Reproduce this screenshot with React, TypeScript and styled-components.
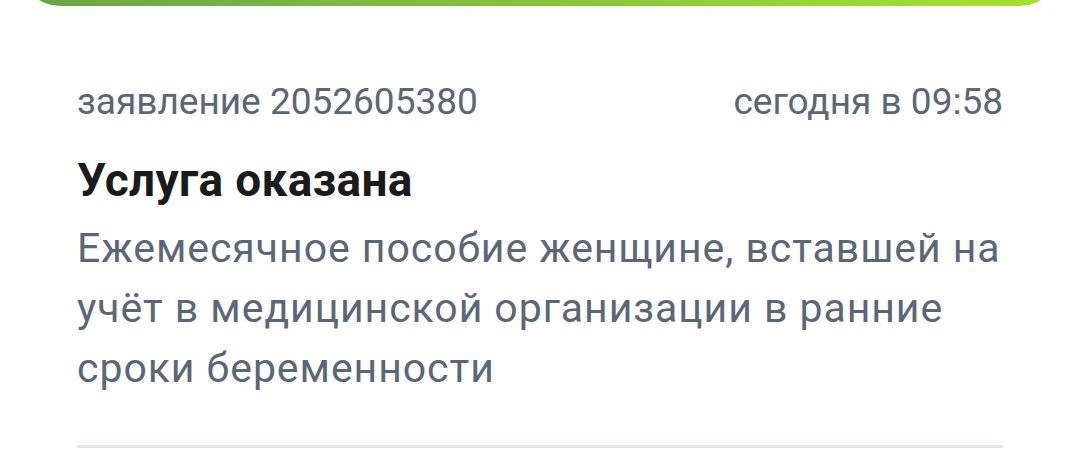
import React from "react";
import styled, { createGlobalStyle } from "styled-components";

const Global = createGlobalStyle`
  html, body { margin: 0; padding: 0; background: #ffffff; }
  body { font-family: Roboto, "Noto Sans", "Liberation Sans", sans-serif; }
`;

const Page = styled.div`
  width: 1080px;
  height: 456px;
  overflow: hidden;
  background: #ffffff;
  display: flex;
  flex-direction: column;
`;

const StatusBar = styled.div`
  margin: -34px 20px 0;
  height: 40px;
  border-radius: 0 0 40px 40px;
  background: linear-gradient(90deg, #6aa449 0%, #86c43e 50%, #a6e32e 100%);
  flex-shrink: 0;
`;

const Card = styled.div`
  padding: 74px 77px 0;
  display: flex;
  flex-direction: column;
`;

const Meta = styled.div`
  display: flex;
  justify-content: space-between;
  align-items: baseline;
  font-size: 37px;
  line-height: 44px;
  color: #5b6676;
`;

const Title = styled.h2`
  margin: 28px 0 0;
  font-size: 46px;
  line-height: 56px;
  font-weight: 700;
  color: #1b1b1b;
  letter-spacing: 0.3px;
`;

const Description = styled.p`
  margin: 10px 0 0;
  font-size: 41px;
  line-height: 60px;
  color: #5b6676;
  letter-spacing: 0.95px;
`;

const Divider = styled.hr`
  margin: 47px 0 0;
  border: none;
  height: 3px;
  background: #e4e8eb;
`;

export default function App() {
  return (
    <Page>
      <Global />
      <StatusBar />
      <Card>
        <Meta>
          <span>заявление 2052605380</span>
          <span>сегодня в 09:58</span>
        </Meta>
        <Title>Услуга оказана</Title>
        <Description>
          Ежемесячное пособие женщине, вставшей на учёт в медицинской организации в ранние сроки беременности
        </Description>
        <Divider />
      </Card>
    </Page>
  );
}
